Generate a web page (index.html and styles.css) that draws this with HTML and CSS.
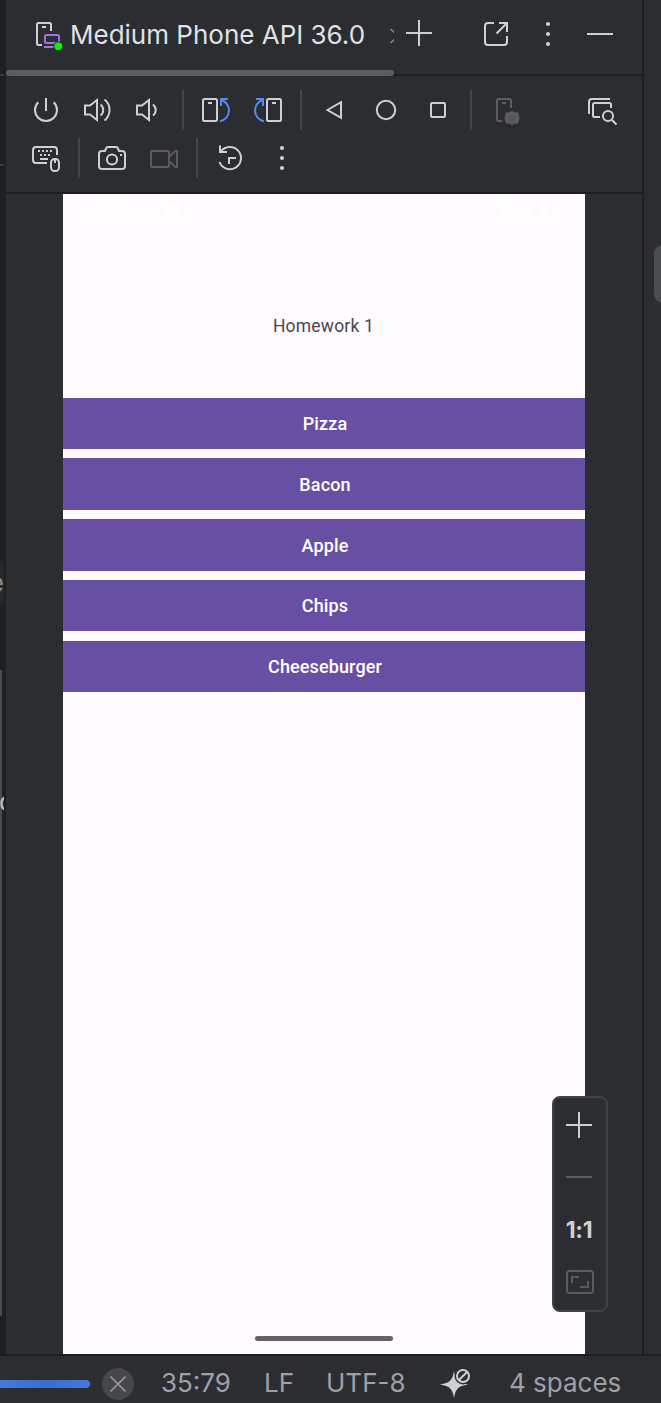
FILE: index.html
```html
<!DOCTYPE html>
<html lang="en">
<head>
<meta charset="utf-8">
<title>Running Devices</title>
<link rel="stylesheet" href="styles.css">
</head>
<body>
<div class="ide">
  <div class="workspace">
    <aside class="editor-edge">
      <i class="edge-line edge-line-a"></i>
      <i class="edge-line edge-line-b"></i>
      <span class="edge-char edge-char-a"><b>e</b></span>
      <i class="edge-scroll"></i>
      <span class="edge-char edge-char-b"><b>c</b></span>
    </aside>

    <main class="panel">
      <header class="tabs">
        <div class="tab">
          <svg class="icon" viewBox="0 0 32 32"><path d="M19 13V6.500Q19 5 17.500 5H6.500Q5 5 5 6.500V25.500Q5 27 6.500 27H10M10 9h4"/><rect class="purple" x="13" y="17" width="14" height="8" rx="1.500"/><path class="purple" d="M12 29h10"/><circle class="live" cx="26.300" cy="28.300" r="4.500"/></svg>
          <span class="tab-title">Medium Phone API 36.0</span>
          <svg class="tab-close" viewBox="0 0 4 16"><path d="M.5 1L8 8L.5 15"/></svg>
        </div>
        <svg class="icon add" viewBox="0 0 32 32"><path d="M3 15h26M16 2v26"/></svg>
        <svg class="icon detach" viewBox="0 0 32 32"><path d="M14 5H8Q5 5 5 8V24Q5 27 8 27H24Q27 27 27 24V18M19 5h8v9M26.500 5.500L16.500 15.500"/></svg>
        <svg class="icon solid" viewBox="0 0 32 32"><circle cx="16" cy="6" r="2.100"/><circle cx="16" cy="16" r="2.100"/><circle cx="16" cy="26" r="2.100"/></svg>
        <svg class="icon" viewBox="0 0 32 32"><path d="M3 16h26"/></svg>
        <i class="tab-scroll"></i>
      </header>

      <section class="toolbar">
        <div class="tools">
          <svg class="icon" viewBox="0 0 32 32"><path d="M8.200 8.200A11 11 0 1 0 23.800 8.200M16 4v13"/></svg>
          <svg class="icon" viewBox="0 0 32 32"><path d="M3 11.500h5l7-5.500v20l-7-5.500H3zM18.500 10.500Q21.200 12.500 21.200 16T18.500 21.500M22.500 5.500Q27.500 9.500 27.500 16T22.500 26.500"/></svg>
          <svg class="icon" viewBox="0 0 32 32"><path d="M3 11.500h5l7-5.500v20l-7-5.500H3zM19 10.500Q21.700 12.500 21.700 16T19 21.500"/></svg>
          <i class="sep"></i>
          <svg class="icon" viewBox="0 0 32 32"><rect x="3" y="5" width="14" height="22" rx="1.500"/><path d="M8 9h4"/><path class="blue" d="M20 27.200C25.500 26 29 21.500 29 16.500C29 12 26 7.500 21.500 6M28 5H21V12"/></svg>
          <svg class="icon" viewBox="0 0 32 32"><rect x="15" y="5" width="14" height="22" rx="1.500"/><path d="M20 9h4"/><path class="blue" d="M12 27.200C6.500 26 3 21.500 3 16.500C3 12 6 7.500 10.500 6M4 5H11V12"/></svg>
          <i class="sep"></i>
          <svg class="icon" viewBox="0 0 32 32"><path d="M9.500 16L23 8.200V23.800z"/></svg>
          <svg class="icon" viewBox="0 0 32 32"><circle cx="16" cy="16" r="9.200"/></svg>
          <svg class="icon" viewBox="0 0 32 32"><rect x="9" y="9" width="14" height="14" rx="1.200"/></svg>
          <i class="sep"></i>
          <svg class="icon off" viewBox="-4 0 32 32"><path d="M19 14V6.500Q19 5 17.500 5H6.500Q5 5 5 6.500V25.500Q5 27 6.500 27H10M10 9h4"/><path class="gear" d="M20 17.200l2 1.500 3.700 .3 1 3.300 .3 1.700-.3 1.700-1 3.300-3.700 .3-2 1.500-2-1.500-3.700-.3-1-3.300-.3-1.700 .3-1.700 1-3.300 3.700-.3z"/><circle class="gear-hole" cx="20" cy="24" r="2.500"/></svg>
          <svg class="icon shots" viewBox="0 0 32 32"><path d="M3 20V8Q3 5 6 5H24M25 14V10.500Q25 9 23.500 9H8.500Q7 9 7 10.500V21.500Q7 23 8.500 23H14M26 26L30.500 30.500"/><circle cx="22" cy="22" r="5"/></svg>
        </div>
        <div class="tools">
          <svg class="icon" viewBox="0 0 32 32"><path d="M27 13V8Q27 5 24 5H6Q3 5 3 8V18Q3 21 6 21H17M10 17h8"/><path d="M8 9h2m2 0h2m2 0h2m2 0h2M10 13h2m2 0h2m2 0h2"/><rect x="21" y="17" width="8" height="12" rx="3.500"/><path d="M25 17v4"/></svg>
          <i class="sep"></i>
          <svg class="icon" viewBox="0 0 32 32"><path d="M3 12Q3 9 6 9H9L10.500 5.500Q11 5 12 5H20Q21 5 21.500 5.500L23 9H26Q29 9 29 12V24Q29 27 26 27H6Q3 27 3 24zM24 13h2"/><circle cx="16" cy="17.500" r="5.100"/></svg>
          <svg class="icon off" viewBox="0 0 32 32"><rect x="3" y="9" width="18" height="16" rx="1"/><path d="M21 15L27.500 9H29V25H27.500L21 19"/></svg>
          <i class="sep"></i>
          <svg class="icon" viewBox="0 0 32 32"><path d="M5.500 20A11.100 11.100 0 1 0 7 9.500M6 3.500V10H13M15 22V16H22"/></svg>
          <svg class="icon solid" viewBox="0 0 32 32"><circle cx="16" cy="6" r="2.100"/><circle cx="16" cy="16" r="2.100"/><circle cx="16" cy="26" r="2.100"/></svg>
        </div>
      </section>

      <section class="stage">
        <div class="phone">
          <div class="phone-status">
            <span>12:04</span>
            <svg class="shield" viewBox="0 0 14 16"><path d="M7 1L13 3V8Q13 13 7 15Q1 13 1 8V3zM4 5l6 6"/></svg>
            <svg class="card" viewBox="0 0 14 16"><path d="M4 1H14V15H0V5z"/></svg>
            <svg class="signals" viewBox="0 0 58 16"><path d="M0 3Q9-3 18 3L9 16zM21 16L36 1V16zM45 4Q50-3 55 4V16H45z"/></svg>
          </div>
          <h1>Homework 1</h1>
          <div class="foods">
            <button>Pizza</button>
            <button>Bacon</button>
            <button>Apple</button>
            <button>Chips</button>
            <button>Cheeseburger</button>
          </div>
          <i class="home-bar"></i>
        </div>
        <div class="zoom">
          <svg class="icon" viewBox="0 0 32 32"><path d="M3 16h26M16 3v26"/></svg>
          <svg class="icon off" viewBox="0 0 32 32"><path d="M3 16h26"/></svg>
          <span>1:1</span>
          <svg class="icon off" viewBox="0 0 32 32"><rect x="4" y="6" width="26" height="22" rx="2.500"/><path d="M9 18V12H16M25 16V22H17"/></svg>
        </div>
      </section>
    </main>

    <aside class="right-edge"><i></i></aside>
  </div>

  <footer class="status">
    <i class="progress"></i>
    <svg class="cancel" viewBox="0 0 32 32"><circle cx="16" cy="16" r="16"/><path d="M8.500 8.500l15 15M23.500 8.500l-15 15"/></svg>
    <span class="st-pos">35:79</span>
    <span class="st-eol">LF</span>
    <span class="st-enc">UTF-8</span>
    <svg class="ai" viewBox="0 0 32 32"><path class="star" d="M14 3C15.500 12 18 15 28 16.500C18 18 15.500 21 14 30C12.500 21 10 18 0 16.500C10 15 12.500 12 14 3z"/><circle class="ban-bg" cx="23" cy="8" r="8.500"/><circle class="ban" cx="23" cy="8" r="6"/><path class="ban" d="M19 12L27 4"/></svg>
    <span class="st-indent">4 spaces</span>
  </footer>
</div>
</body>
</html>
```
FILE: styles.css
```css
* { box-sizing: border-box; }
body { margin: 0; background: #2b2d30; font-family: Inter, "Liberation Sans", sans-serif; }
svg { display: block; flex: none; }
i { display: block; flex: none; }

.ide { width: 661px; height: 1403px; display: flex; flex-direction: column; overflow: hidden; }
.workspace { height: 1354px; flex: none; display: flex; }

.icon { width: 32px; height: 32px; fill: none; stroke: #ced0d6; stroke-width: 2; }
.icon.solid { fill: #ced0d6; stroke: none; }
.icon.off { stroke: #5a5b5c; }
.icon .blue { stroke: #548af7; }
.icon .purple { stroke: #a571e6; }
.icon .live { fill: #00f500; stroke: #1c3520; stroke-width: 1; }
.icon .gear { fill: #5a5b5c; stroke: #5a5b5c; stroke-width: 1; stroke-linejoin: round; }
.icon .gear-hole { stroke: #505152; stroke-width: 1; }

/* sliver of the editor left of the tool window */
.editor-edge { position: relative; width: 6px; flex: none; background: #1e1f22; overflow: hidden; }
.editor-edge > * { position: absolute; left: 0; }
.edge-line { width: 4px; height: 2px; background: #393b40; }
.edge-line-a { top: 74px; }
.edge-line-b { top: 164px; }
.edge-char { width: 4px; height: 44px; overflow: hidden; font-size: 26px; line-height: 44px; display: flex; justify-content: flex-end; }
.edge-char b { font-weight: 400; }
.edge-char-a { top: 561px; background: #26282c; color: #868a91; }
.edge-char-b { top: 780px; color: #bcbec4; justify-content: flex-start; }
.edge-char-b b { margin-left: -1px; }
.edge-scroll { top: 670px; width: 2px; height: 646px; background: #4a4b4d; }

.panel { width: 636px; flex: none; display: flex; flex-direction: column; }

.tabs { position: relative; height: 76px; flex: none; border-bottom: 2px solid #1e1f22; padding: 18px 0 0; display: flex; align-items: flex-start; }
.tab { width: 388px; height: 34px; display: flex; padding-left: 26px; }
.tab-title { margin-left: 6px; width: 316px; font-size: 26px; line-height: 34px; color: #dfe1e5; white-space: nowrap; }
.tab-close { width: 4px; height: 16px; margin: 10px 0 0 4px; fill: none; stroke: #868a91; stroke-width: 1.5; }
.add { margin-left: 9px; }
.detach { margin-left: 45px; }
.detach + .icon { margin-left: 20px; }
.detach + .icon + .icon { margin-left: 20px; }
.tab-scroll { position: absolute; left: 0; top: 70px; width: 388px; height: 6px; border-radius: 3px; background: #5a5d63; }

.toolbar { height: 118px; flex: none; border-bottom: 2px solid #1e1f22; padding: 14px 24px 0; display: flex; flex-direction: column; gap: 8px; }
.tools { height: 40px; display: flex; align-items: center; }
.tools .icon + .icon { margin-left: 20px; }
.tools .icon + .icon.shots { margin-left: auto; }
.sep { width: 2px; height: 40px; margin: 0 16px; background: #43454a; }

.stage { position: relative; height: 1160px; padding-left: 57px; }
.phone { width: 522px; height: 1160px; background: #fffbfe; display: flex; flex-direction: column; align-items: center; font-family: Roboto, sans-serif; }
.phone-status { width: 522px; height: 30px; padding: 0 33px 0 22px; display: flex; align-items: center; color: #fff; font-size: 18px; flex: none; }
.phone-status svg { fill: #fff; width: 14px; height: 16px; margin-left: 8px; }
.phone-status .shield { fill: none; stroke: #fff; stroke-width: 2; }
.phone-status .card { margin-left: 14px; }
.phone-status .signals { width: 58px; margin-left: auto; }
.phone h1 { margin: 90px 0 0; height: 24px; font-size: 17.500px; line-height: 24px; font-weight: 400; letter-spacing: .2px; color: #49454f; padding-right: 1px; }
.foods { width: 522px; margin-top: 59.500px; display: flex; flex-direction: column; gap: 9.300px; }
.foods button { height: 51.500px; border: 0; padding: 1.500px 0 0 2px; background: #6750a3; color: #fff; font: 500 18px/24px Roboto, sans-serif; letter-spacing: .12px; }
.home-bar { width: 138px; height: 5px; margin: auto 0 13px; border-radius: 3px; background: #656267; }

.zoom { position: absolute; left: 546px; top: 902px; width: 56px; height: 216px; border: 2px solid #414243; border-radius: 8px; background: #2b2d30; padding: 11px 0 0 9px; display: flex; flex-direction: column; gap: 20px; }
.zoom span { width: 32px; height: 32px; line-height: 34px; text-align: center; font-size: 23px; font-weight: 700; letter-spacing: -.4px; color: #ced0d6; }

.right-edge { flex: 1; border-left: 2px solid #1e1f22; padding: 245px 0 0 10px; overflow: hidden; }
.right-edge i { width: 20px; height: 58px; border-radius: 9px; background: #4c4d50; }

.status { height: 49px; flex: none; border-top: 2px solid #1e1f22; display: flex; align-items: center; padding-top: 8px; color: #9da0a8; font-size: 26px; line-height: 34px; white-space: nowrap; }
.progress { width: 90px; height: 8px; border-radius: 0 4px 4px 0; background: linear-gradient(90deg, #4778dc, #386dd3 50%, #4778dc); }
.cancel { width: 32px; height: 32px; margin-left: 12px; fill: #46474a; stroke: none; }
.cancel path { stroke: #999a9e; stroke-width: 1.600; }
.status span { flex: none; padding-bottom: 2px; }
.st-pos { width: 72px; margin-left: 27px; }
.st-eol { width: 32px; margin-left: 31px; }
.st-enc { width: 80px; margin-left: 30px; }
.ai { width: 32px; height: 32px; margin-left: 34px; }
.star { fill: #ced0d6; }
.ban-bg { fill: #2b2d30; }
.ban { fill: none; stroke: #ced0d6; stroke-width: 2; }
.st-indent { margin-left: 37px; }
```
